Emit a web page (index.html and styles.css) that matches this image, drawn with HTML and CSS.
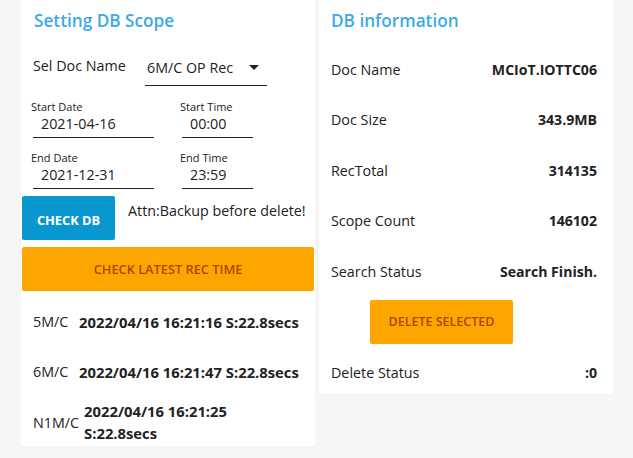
FILE: index.html
```html
<!DOCTYPE html>
<html>
<head>
<meta charset="utf-8">
<link rel="stylesheet" href="styles.css">
</head>
<body>
<div class="page">
  <section class="card left">
    <h2 class="title">Setting DB Scope</h2>
    <div class="sel-row">
      <span class="sel-label">Sel Doc Name</span>
      <div class="select">
        <span>6M/C OP Rec</span>
        <svg class="caret" width="10" height="5" viewBox="0 0 10 5"><path d="M0 0H10L5 5Z" fill="#222"/></svg>
      </div>
    </div>
    <div class="fields">
      <div class="field wide">
        <span class="flabel">Start Date</span>
        <span class="fvalue">2021-04-16</span>
      </div>
      <div class="field narrow">
        <span class="flabel">Start Time</span>
        <span class="fvalue">00:00</span>
      </div>
      <div class="field wide">
        <span class="flabel">End Date</span>
        <span class="fvalue">2021-12-31</span>
      </div>
      <div class="field narrow">
        <span class="flabel">End Time</span>
        <span class="fvalue">23:59</span>
      </div>
    </div>
    <div class="check-row">
      <button class="btn blue">CHECK DB</button>
      <span class="attn">Attn:Backup before delete!</span>
    </div>
    <button class="btn orange full">CHECK LATEST REC TIME</button>
    <div class="recs">
      <div class="rec">
        <span class="mc">5M/C</span><b>2022/04/16 16:21:16 S:22.8secs</b>
      </div>
      <div class="rec">
        <span class="mc">6M/C</span><b>2022/04/16 16:21:47 S:22.8secs</b>
      </div>
      <div class="rec last">
        <span class="mc">N1M/C</span><b>2022/04/16 16:21:25<br>S:22.8secs</b>
      </div>
    </div>
  </section>
  <section class="card right">
    <h2 class="title">DB information</h2>
    <div class="info first"><span>Doc Name</span><b>MCIoT.IOTTC06</b></div>
    <div class="info"><span>Doc Size</span><b>343.9MB</b></div>
    <div class="info"><span>RecTotal</span><b>314135</b></div>
    <div class="info"><span>Scope Count</span><b>146102</b></div>
    <div class="info"><span>Search Status</span><b>Search Finish.</b></div>
    <div class="del-wrap"><button class="btn orange del">DELETE SELECTED</button></div>
    <div class="info"><span>Delete Status</span><b>:0</b></div>
  </section>
</div>
</body>
</html>
```

FILE: styles.css
```css
* { box-sizing: border-box; }
html, body { margin: 0; padding: 0; }
body {
  background: #f6f6f6;
  font-family: "Open Sans", "Noto Sans", sans-serif;
  color: #222;
  width: 633px;
  height: 458px;
  overflow: hidden;
}
.page {
  display: flex;
  align-items: flex-start;
  gap: 4px;
  padding-left: 21px;
}
.card {
  background: #fff;
  width: 294px;
}
.left { height: 446px; }
.right { height: 394px; padding: 0 16px 0 12px; }
.title {
  margin: 0;
  height: 42px;
  padding-top: 8px;
  font-size: 17.2px;
  font-weight: 600;
  color: #3ba9ea;
  line-height: 26px;
}
.left .title { padding-left: 13px; }
.sel-row {
  display: flex;
  height: 48px;
  padding-left: 12px;
}
.sel-label {
  font-size: 14.3px;
  line-height: 20px;
  margin-top: 14px;
  width: 112px;
}
.select {
  width: 122px;
  height: 44px;
  border-bottom: 1px solid #222;
  display: flex;
  align-items: flex-end;
  justify-content: space-between;
  padding: 0 8px 7px 2px;
  font-size: 14.3px;
  line-height: 20px;
}
.caret { margin-bottom: 8px; }
.fields {
  display: grid;
  grid-template-columns: 149px 71px;
  padding-left: 10px;
  row-gap: 3px;
}
.field {
  display: flex;
  flex-direction: column;
  height: 48px;
  padding-top: 10px;
}
.flabel {
  font-size: 11px;
  line-height: 14px;
}
.fvalue {
  font-size: 14.3px;
  line-height: 20px;
  margin-left: 2px;
  padding-left: 8px;
  border-bottom: 1px solid #222;
  height: 24px;
}
.wide .fvalue { width: 121px; }
.narrow .fvalue { width: 71px; }
.check-row {
  display: flex;
  align-items: flex-start;
  margin-top: 7px;
  padding-left: 1px;
}
.btn {
  border: none;
  border-radius: 2px;
  font-family: inherit;
  padding: 0;
}
.blue {
  background: #0997cf;
  color: #fff;
  width: 93px;
  height: 44px;
  font-size: 12.8px;
  font-weight: 700;
  line-height: 44px;
  padding-top: 2px;
}
.attn {
  font-size: 14.3px;
  line-height: 20px;
  margin-left: 13px;
  margin-top: 5px;
}
.orange {
  background: #ffa500;
  color: #b0430c;
  height: 44px;
  font-weight: 600;
}
.full {
  display: block;
  margin: 7px 0 0 1px;
  width: 292px;
  font-size: 12.8px;
}
.recs { padding: 6px 0 0 12px; }
.rec {
  display: flex;
  align-items: center;
  height: 50px;
  font-size: 14.3px;
  line-height: 22px;
}
.rec .mc { width: 46px; }
.rec b { font-weight: 700; font-size: 14.8px; }
.rec.last { height: 50px; margin-top: 0; }
.rec.last .mc { width: auto; margin-right: 5px; margin-top: 1px; }
.rec.last b { line-height: 22px; }
.info {
  display: flex;
  justify-content: space-between;
  align-items: center;
  height: 50.5px;
  font-size: 14.3px;
}
.info.first { margin-top: 2px; }
.info b { font-weight: 700; font-size: 14.1px; }
.del-wrap {
  height: 51px;
  padding: 3px 0 0 39px;
}
.del {
  width: 143px;
  font-size: 12.5px;
}
```
